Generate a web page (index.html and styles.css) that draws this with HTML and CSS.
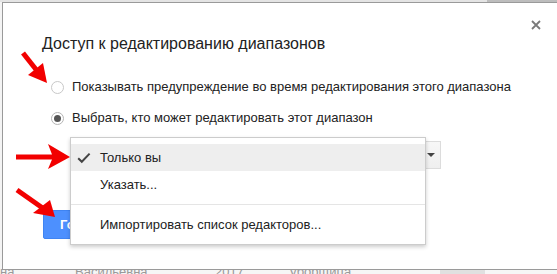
FILE: index.html
```html
<!DOCTYPE html>
<html lang="ru">
<head>
<meta charset="utf-8">
<title>Доступ к редактированию диапазонов</title>
<link rel="stylesheet" href="styles.css">
</head>
<body>
<div class="page">
  <div class="topstrip"><div class="ts-light"></div><div class="ts-dark"></div></div>
  <div class="main">
    <div class="leftstrip"></div>
    <div class="dialog">
      <div class="close" aria-label="Закрыть">
        <svg width="10" height="10" viewBox="0 0 10 10"><path d="M1 1 L9 9 M9 1 L1 9" stroke="#7a7a7a" stroke-width="1.8" fill="none"/></svg>
      </div>
      <h1 class="title">Доступ к редактированию диапазонов</h1>
      <label class="radio-row"><span class="radio"></span><span class="radio-text">Показывать предупреждение во время редактирования этого диапазона</span></label>
      <label class="radio-row second"><span class="radio checked"><span class="dot"></span></span><span class="radio-text">Выбрать, кто может редактировать этот диапазон</span></label>
      <div class="select"><div class="select-arrow"></div></div>
      <div class="buttons"><button class="btn-primary">Готово</button></div>
      <div class="menu">
        <div class="menu-item active">
          <svg class="check" width="14" height="12" viewBox="0 0 14 12"><path d="M1.2 6.2 L4.8 9.8 L12.6 1.6" stroke="#444" stroke-width="2" fill="none"/></svg>
          <span>Только вы</span>
        </div>
        <div class="menu-item"><span>Указать...</span></div>
        <div class="menu-sep"></div>
        <div class="menu-item"><span>Импортировать список редакторов...</span></div>
      </div>
    </div>
  </div>
  <div class="sheet-row">
    <span class="cell c1">на</span>
    <span class="cell c2">Васильевна</span>
    <span class="cell c3">2017</span>
    <span class="cell c4">уборщица</span>
    <span class="cell c5"></span>
  </div>
  <svg class="arrows" width="557" height="274" viewBox="0 0 557 274">
    <line x1="23" y1="53" x2="38" y2="72" stroke="#f20000" stroke-width="5"/>
    <polygon points="28,75 43,63 47,83" fill="#f20000"/>
    <polygon points="16,154.5 52,154.5 48,144 70,157 48,169 52,159.5 16,159.5" fill="#f20000"/>
    <line x1="17" y1="190" x2="44" y2="209" stroke="#f20000" stroke-width="5"/>
    <polygon points="50,200 55,217 33,213" fill="#f20000"/>
  </svg>
</div>
</body>
</html>
```
FILE: styles.css
```css
html, body {
  margin: 0;
  padding: 0;
}
body {
  width: 557px;
  height: 274px;
  overflow: hidden;
  background: #f3f3f3;
  font-family: "Liberation Sans", Arial, sans-serif;
  color: #222;
}
.page {
  position: relative;
  width: 557px;
  height: 274px;
  overflow: hidden;
}
.topstrip {
  display: flex;
  height: 2px;
}
.ts-light {
  width: 487px;
  background: #e4e4e4;
}
.ts-dark {
  flex: 1;
  background: #bdbdbd;
}
.main {
  display: flex;
  height: 267px;
}
.leftstrip {
  width: 2px;
  flex: none;
  background: #f4f4f4;
}
.dialog {
  position: relative;
  flex: none;
  width: 600px;
  box-sizing: border-box;
  height: 268px;
  background: #fff;
  border: 1px solid #9a9a9a;
  border-right: none;
  padding: 31px 0 0 39px;
}
.close {
  position: absolute;
  left: 528px;
  top: 17px;
  width: 10px;
  height: 10px;
  display: flex;
}
.title {
  margin: 0;
  font-size: 16px;
  line-height: 20px;
  font-weight: normal;
  color: #222;
}
.radio-row {
  display: flex;
  align-items: center;
  margin-top: 25px;
  margin-left: 9px;
  height: 16px;
  font-size: 13px;
  line-height: 16px;
}
.radio-row.second {
  margin-top: 15px;
}
.radio {
  box-sizing: border-box;
  width: 13px;
  height: 13px;
  border-radius: 50%;
  border: 1px solid #c8c8c8;
  margin-right: 8px;
  display: flex;
  align-items: center;
  justify-content: center;
  flex: none;
}
.radio.checked {
  border-color: #b5b5b5;
}
.dot {
  width: 7px;
  height: 7px;
  border-radius: 50%;
  background: #555;
}
.select {
  margin-top: 15px;
  margin-left: 30px;
  width: 369px;
  height: 28px;
  box-sizing: border-box;
  border: 1px solid #dcdcdc;
  background: linear-gradient(#f7f7f7, #efefef);
  display: flex;
  justify-content: flex-end;
  align-items: center;
  padding-right: 5px;
}
.select-arrow {
  width: 0;
  height: 0;
  border-left: 4px solid transparent;
  border-right: 4px solid transparent;
  border-top: 4px solid #444;
}
.buttons {
  margin-top: 41px;
  margin-left: 1px;
  display: flex;
}
.btn-primary {
  height: 29px;
  box-sizing: border-box;
  padding: 0 16px;
  background: #4d90fe;
  border: 1px solid #3f84f2;
  border-radius: 2px;
  color: #fff;
  font-family: "Liberation Sans", Arial, sans-serif;
  font-weight: bold;
  font-size: 13px;
}
.menu {
  position: absolute;
  left: 67px;
  top: 134px;
  width: 356px;
  box-sizing: border-box;
  background: #fff;
  border: 1px solid rgba(0, 0, 0, 0.2);
  box-shadow: 0 2px 4px rgba(0, 0, 0, 0.2);
  padding: 6px 0;
}
.menu-item {
  position: relative;
  height: 27px;
  display: flex;
  align-items: center;
  padding-left: 29px;
  font-size: 13px;
  color: #222;
}
.menu-item.active {
  background: #eeeeee;
}
.check {
  position: absolute;
  left: 6px;
  top: 8px;
}
.menu-sep {
  height: 1px;
  background: #e5e5e5;
  margin: 6px 0;
}
.sheet-row {
  display: flex;
  height: 5px;
  overflow: hidden;
  background: #f6f6f6;
  font-size: 13px;
  line-height: 14px;
  color: #9a9a9a;
}
.cell {
  display: block;
  height: 14px;
  margin-top: -4px;
}
.c1 { width: 75px; padding-left: 0; }
.c2 { width: 140px; }
.c3 { width: 75px; }
.c4 { width: 150px; }
.c5 {
  width: 45px;
  background: #e0e0e0;
}
.arrows {
  position: absolute;
  left: 0;
  top: 0;
  pointer-events: none;
}
```
